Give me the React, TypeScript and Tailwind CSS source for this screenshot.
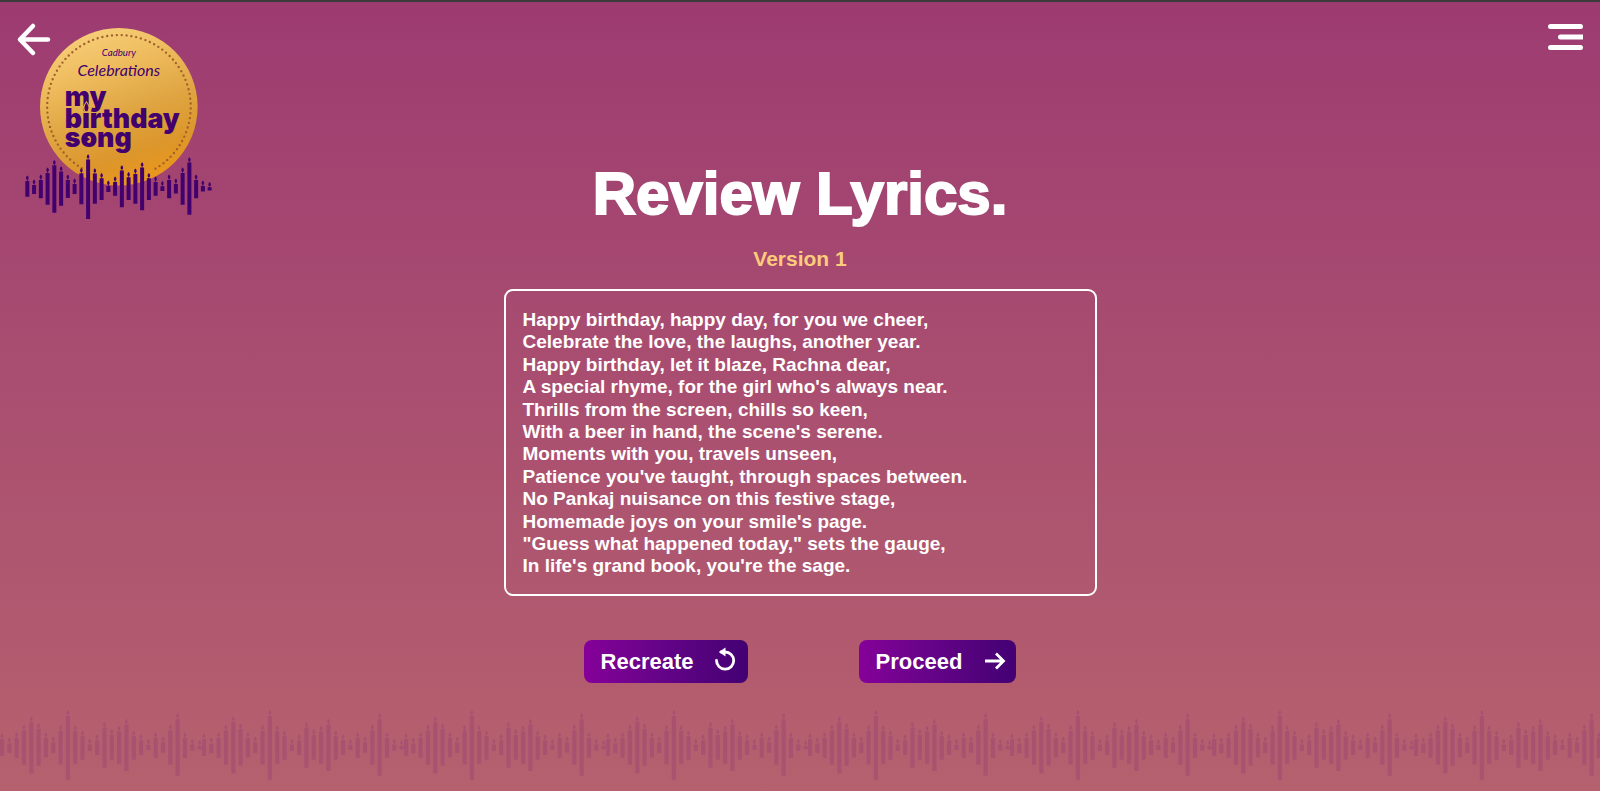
import React from "react";

const FONT = "font-['Liberation_Sans',Arial,sans-serif]";

const LYRICS = [
  "Happy birthday, happy day, for you we cheer,",
  "Celebrate the love, the laughs, another year.",
  "Happy birthday, let it blaze, Rachna dear,",
  "A special rhyme, for the girl who's always near.",
  "Thrills from the screen, chills so keen,",
  "With a beer in hand, the scene's serene.",
  "Moments with you, travels unseen,",
  "Patience you've taught, through spaces between.",
  "No Pankaj nuisance on this festive stage,",
  "Homemade joys on your smile's page.",
  "\"Guess what happened today,\" sets the gauge,",
  "In life's grand book, you're the sage.",
];

// [top, bottom] of every candle in the wave
const CANDLES = [
  [543, 590], [555, 582], [540, 595], [519, 614], [496, 638], [515, 617],
  [540, 594], [552, 582], [520, 613], [479, 657], [521, 611], [535, 600],
  [558, 576], [546, 587], [512, 622], [532, 600], [522, 611], [503, 631],
  [535, 600], [546, 587], [559, 573], [540, 595], [552, 581], [519, 614],
  [488, 644], [540, 595], [558, 575], [562, 572],
];

const Candles: React.FC = () => (
  <>
    {CANDLES.map(([top, bottom], i) => {
      const x = 84 + i * 20.22;
      return (
        <path
          key={i}
          d={`M${x - 6} ${top}H${x - 1}V${top - 3}C${x - 6} ${top - 6} ${x - 4} ${top - 13} ${x} ${top - 16}C${x + 4} ${top - 13} ${x + 6} ${top - 6} ${x + 1} ${top - 3}V${top}H${x + 6}V${bottom}H${x - 6}Z`}
        />
      );
    })}
  </>
);

/**
 * Gold seal with the candle wave running across its lower edge
 */
const Logo: React.FC = () => (
  <svg
    viewBox="74 82 566 580"
    className="w-[189px] shrink-0"
    role="img"
    aria-label="Cadbury Celebrations my birthday song"
  >
    <defs>
      <linearGradient id="gold" x1="0.3" y1="0" x2="0.65" y2="1">
        <stop offset="0" stopColor="#f7cf7a" />
        <stop offset="0.25" stopColor="#efbd5f" />
        <stop offset="0.55" stopColor="#dfa542" />
        <stop offset="0.8" stopColor="#dc962b" />
        <stop offset="1" stopColor="#ec971a" />
      </linearGradient>
    </defs>
    <circle cx="358" cy="321" r="236" fill="url(#gold)" />
    <path
      d="M247 505A215 215 0 1 1 461 510"
      fill="none"
      stroke="#a0602a"
      strokeWidth="7"
      strokeLinecap="round"
      strokeDasharray="0 14.5"
    />
    <g fill="#42006f">
      <text
        x="358"
        y="170"
        textAnchor="middle"
        className="font-['Lato',sans-serif] text-[29px] italic"
      >
        Cadbury
      </text>
      <text
        x="358"
        y="230"
        textAnchor="middle"
        className="font-['Lato',sans-serif] text-[48px] italic"
      >
        Celebrations
      </text>
      <text className="font-['Inter',sans-serif] text-[80px] font-black">
        <tspan x="196" y="318">my</tspan>
        <tspan x="196" y="384">birthday</tspan>
        <tspan x="196" y="440">song</tspan>
      </text>
      {/* Candle flame over the first "i" and play mark inside the "o" */}
      <path
        d="M261 306Q274 322 265 336H257Q248 322 261 306Z"
        stroke="#e6ae4b"
        strokeWidth="3"
      />
      <path d="M256 408L272 418L256 428Z" />
      <Candles />
    </g>
  </svg>
);

const WaveFooter: React.FC = () => (
  <svg className="block h-[91px] w-full shrink-0" aria-hidden="true">
    <defs>
      <pattern id="wave" width="202" height="91" patternUnits="userSpaceOnUse">
        <g
          transform="translate(-28.4 -157.5) scale(0.362)"
          fill="#8e3575"
          fillOpacity="0.3"
        >
          <Candles />
        </g>
      </pattern>
    </defs>
    <rect width="100%" height="91" fill="url(#wave)" />
  </svg>
);

interface ActionButtonProps {
  label: string;
  children: React.ReactNode;
}

const ActionButton: React.FC<ActionButtonProps> = ({ label, children }) => (
  <button
    type="button"
    className="flex h-[43px] items-center gap-[18px] rounded-lg bg-linear-to-r from-[#850099] to-[#430073] pr-2 pl-[17px] text-[22px] font-bold text-white"
  >
    {label}
    {children}
  </button>
);

const App: React.FC = () => {
  return (
    <div
      className={`flex min-h-screen flex-col border-t-2 border-[#3d3a3c] bg-linear-to-b from-[#9d3b71] to-[#b6616e] ${FONT}`}
    >
      <div className="grid grow grid-cols-[1fr_auto_1fr]">
        {/* Back and logo */}
        <div className="flex items-start pt-5 pl-4">
          <button type="button" aria-label="Back">
            <svg
              className="h-9 w-9"
              viewBox="0 0 36 36"
              fill="none"
              stroke="white"
              strokeWidth="4.5"
              strokeLinecap="round"
              strokeLinejoin="round"
            >
              <path d="M17 4L4 17.5L17 31M4 17.5H32" />
            </svg>
          </button>
          <div className="-ml-7 pt-[5px]">
            <Logo />
          </div>
        </div>

        {/* Lyrics */}
        <main className="flex w-[593px] flex-col items-center pt-[157px]">
          <h1 className="text-[60px] leading-[70px] font-bold text-white [-webkit-text-stroke:2px_white]">
            Review Lyrics.
          </h1>
          <h2 className="mt-[18px] text-[21px] leading-[24px] font-bold text-[#fdcb7c]">
            Version 1
          </h2>
          <div className="mt-[18px] w-full rounded-[9px] border-2 border-white px-[17px] pt-[18px] pb-4 text-[19px] leading-[1.18] font-bold text-white">
            {LYRICS.map((line) => (
              <p key={line}>{line}</p>
            ))}
          </div>
          <div className="mt-11 flex gap-[111px]">
            <ActionButton label="Recreate">
              <svg
                className="h-7 w-7"
                viewBox="0 0 28 28"
                fill="none"
                stroke="white"
                strokeWidth="2.8"
              >
                <path
                  d="M4.500 13.500A8.600 8.600 0 1 0 13 5H9"
                  strokeLinecap="round"
                />
                <path d="M13.500 0.500V9.500L7 5Z" fill="white" stroke="none" />
              </svg>
            </ActionButton>
            <ActionButton label="Proceed">
              <svg
                className="h-7 w-7"
                viewBox="0 0 28 28"
                fill="none"
                stroke="white"
                strokeWidth="2.8"
              >
                <path d="M5 14H23M16 6.500L23.500 14L16 21.500" />
              </svg>
            </ActionButton>
          </div>
        </main>

        {/* Menu */}
        <div className="flex items-start justify-end pt-[22px] pr-4">
          <button type="button" aria-label="Menu">
            <svg className="h-7 w-9" viewBox="0 0 36 28" fill="white">
              <rect x="0" y="0" width="35" height="5" rx="2.5" />
              <path d="M12.5 10.500H35V15.500H12.500A2.500 2.500 0 0 1 12.500 10.500Z" />
              <rect x="0" y="21" width="35" height="5" rx="2.5" />
            </svg>
          </button>
        </div>
      </div>
      <WaveFooter />
    </div>
  );
};

export default App;
